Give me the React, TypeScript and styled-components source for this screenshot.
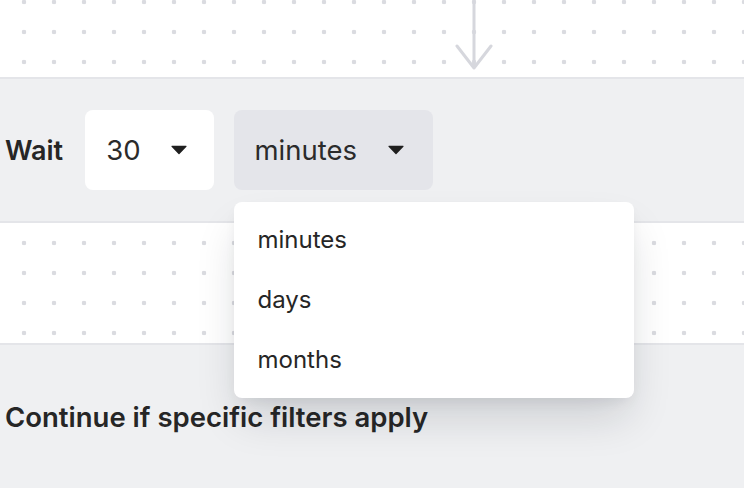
import React, { useState } from "react";
import styled, { createGlobalStyle } from "styled-components";

const GlobalStyle = createGlobalStyle`
  html, body {
    margin: 0;
    padding: 0;
    background: #eff0f2;
    overflow: hidden;
  }
  body {
    font-family: Inter, "Liberation Sans", sans-serif;
    color: #262626;
  }
`;

const units = ["minutes", "days", "months"];

const Caret = () => (
  <svg width="16" height="10" viewBox="0 0 17 10">
    <path d="M1 0.5 H16 a0.6 0.6 0 0 1 0.4 1 L9 9.3 a0.7 0.7 0 0 1 -1 0 L0.6 1.5 a0.6 0.6 0 0 1 0.4 -1 Z" fill="#1f1f1f" />
  </svg>
);

const App: React.FC = () => {
  const [unit] = useState("minutes");
  const [open] = useState(true);

  return (
    <>
      <GlobalStyle />
      <Page>
        <Canvas $height={77} $offsetY={-13}>
          <Connector width="40" height="72" viewBox="0 0 40 72">
            <path d="M20 0 V68 M3 46 L20 68 L37 46" fill="none" stroke="#d6d7dd" strokeWidth="3" strokeLinecap="round" strokeLinejoin="round" />
          </Connector>
        </Canvas>

        <Band $height={142}>
          <StepRow>
            <Label>Wait</Label>
            <Select>
              <SelectText>30</SelectText>
              <Caret />
            </Select>
            <SelectWrap>
              <Select $active={open} $wide>
                <SelectText>{unit}</SelectText>
                <Caret />
              </Select>
              {open && (
                <Dropdown>
                  {units.map((u) => (
                    <Option key={u}>{u}</Option>
                  ))}
                </Dropdown>
              )}
            </SelectWrap>
          </StepRow>
        </Band>

        <Canvas $height={120} $offsetY={5} />

        <Band $height={143}>
          <Heading>Continue if specific filters apply</Heading>
        </Band>
      </Page>
    </>
  );
};

const Page = styled.div`
  display: flex;
  flex-direction: column;
  width: 744px;
  height: 488px;
`;

const Canvas = styled.div<{ $height: number; $offsetY: number }>`
  position: relative;
  height: ${(p) => p.$height}px;
  flex-shrink: 0;
  background-color: #ffffff;
  background-image: radial-gradient(circle, #dadbe0 2px, transparent 2.6px);
  background-size: 30px 30px;
  background-position: 9px ${(p) => p.$offsetY}px;
`;

const Connector = styled.svg`
  position: absolute;
  left: 454px;
  top: 0;
`;

const Band = styled.div<{ $height: number }>`
  height: ${(p) => p.$height}px;
  flex-shrink: 0;
  border-top: 2px solid #e4e5e9;
  border-bottom: 2px solid #e4e5e9;
  background: #eff0f2;
  box-sizing: content-box;
  &:last-child {
    border-bottom: none;
  }
`;

const StepRow = styled.div`
  display: flex;
  align-items: center;
  height: 100%;
  padding-left: 5px;
  gap: 20px;
`;

const Label = styled.div`
  font-size: 27px;
  font-weight: 600;
  margin-right: 2px;
  color: #262626;
`;

const SelectWrap = styled.div`
  position: relative;
`;

const Select = styled.div<{ $active?: boolean; $wide?: boolean }>`
  display: flex;
  align-items: center;
  gap: ${(p) => (p.$wide ? 31 : 30)}px;
  height: 80px;
  padding: 0 ${(p) => (p.$wide ? 29 : 27)}px 0 21px;
  border-radius: 8px;
  background: ${(p) => (p.$active ? "#e4e5ea" : "#ffffff")};
  box-sizing: border-box;
`;

const SelectText = styled.span`
  font-size: 27.5px;
  font-weight: 400;
  color: #2b2b2b;
`;

const Dropdown = styled.div`
  position: absolute;
  top: 92px;
  left: 0;
  width: 400px;
  padding: 8px 0;
  background: #ffffff;
  border-radius: 8px;
  box-shadow: 0 24px 44px -6px rgba(17, 24, 39, 0.16), 0 6px 14px -4px rgba(17, 24, 39, 0.08);
  z-index: 10;
`;

const Option = styled.div`
  height: 60px;
  line-height: 60px;
  padding: 0 24px;
  font-size: 24px;
  color: #262626;
`;

const Heading = styled.div`
  padding: 52px 0 0 5px;
  font-size: 27.5px;
  line-height: 40px;
  font-weight: 600;
  color: #262626;
`;

export default App;
